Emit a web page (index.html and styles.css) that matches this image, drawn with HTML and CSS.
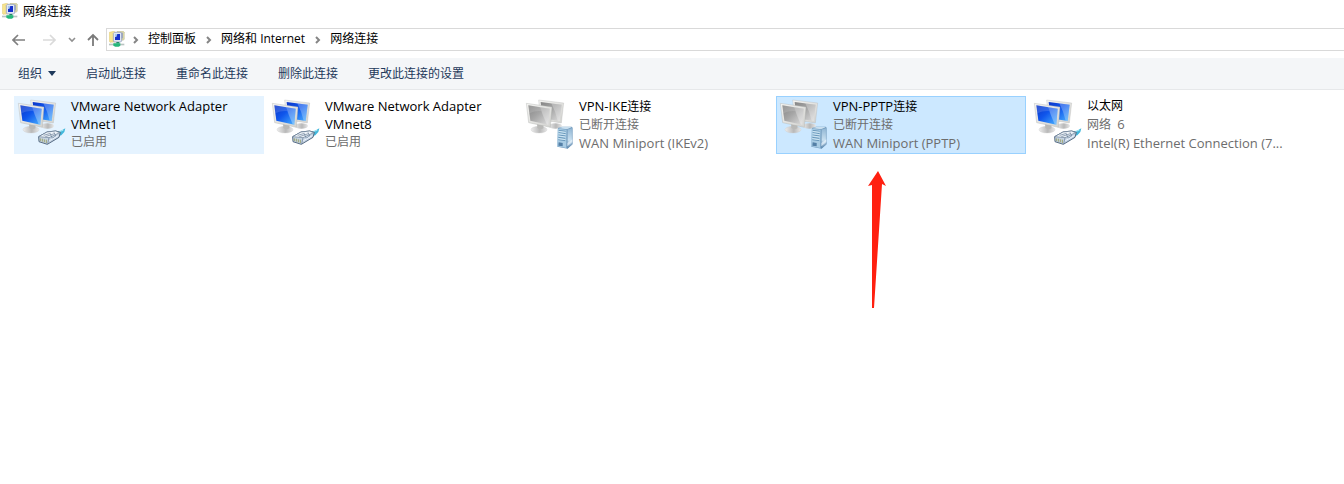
FILE: index.html
```html
<!DOCTYPE html>
<html lang="zh-CN">
<head>
<meta charset="utf-8">
<title>网络连接</title>
<link rel="stylesheet" href="styles.css">
</head>
<body>
<svg class="defs" aria-hidden="true">
  <defs>
    <linearGradient id="blue" x1="0" y1="0" x2="1" y2="1"><stop offset="0" stop-color="#0c35c8"/><stop offset=".45" stop-color="#0f56ec"/><stop offset="1" stop-color="#4bb4ff"/></linearGradient>
    <linearGradient id="gray" x1="0" y1="0" x2="1" y2="1"><stop offset="0" stop-color="#858585"/><stop offset=".45" stop-color="#a5a5a5"/><stop offset="1" stop-color="#dedede"/></linearGradient>
    <linearGradient id="bezel" x1="0" y1="0" x2="1" y2="1"><stop offset="0" stop-color="#f4f4f2"/><stop offset="1" stop-color="#d2d2cf"/></linearGradient>
    <linearGradient id="base" x1="0" y1="0" x2="1" y2="0"><stop offset="0" stop-color="#ededed"/><stop offset=".55" stop-color="#b8b8b8"/><stop offset="1" stop-color="#e8e8e8"/></linearGradient>
    <linearGradient id="side" x1="0" y1="0" x2="0" y2="1"><stop offset="0" stop-color="#8fb5d3"/><stop offset=".6" stop-color="#c9e0f0"/><stop offset="1" stop-color="#5d86ac"/></linearGradient>
    <symbol id="monitors" viewBox="12 12 159 165">
      <ellipse cx="112" cy="102" rx="20" ry="8" fill="url(#base)"/>
      <path d="M62 24L137 33L130 93L68 83Z" fill="url(#bezel)" stroke="#b0b1af"/>
      <path class="screen" d="M68 30L131 38L125 87L73 79Z"/>
      <path d="M100 34L131 38L125 87L119 86Q113 60 100 34Z" fill="#fff" opacity=".26"/>
      <ellipse cx="63" cy="113" rx="24" ry="10" fill="url(#base)" stroke="#c9c9c9"/>
      <path d="M57 94L77 98L76 109Q67 115 58 108Z" fill="#b9b9b7"/>
      <path d="M25 34L102 45L97 106L32 92Z" fill="url(#bezel)" stroke="#a5a6a4"/>
      <path class="screen" d="M31 40L95 50L91 98L37 86Z"/>
      <path d="M66 45L95 50L91 98L86 97Q74 70 66 45Z" fill="#fff" opacity=".3"/>
      <path d="M31 40L66 45L70 57Q52 55 34 64Z" fill="#fff" opacity=".14"/>
    </symbol>
    <symbol id="plug" viewBox="12 12 159 165">
      <path d="M136 121Q153 119 166 109L163 120L154 130L146 133Z" fill="#42b8dc"/>
      <path d="M139 121L160 115" stroke="#a4e6f3" stroke-width="3"/>
      <path d="M86 134L111 120L137 117L151 121L147 136L112 157L87 149Z" fill="#c5d3e2" stroke="#566b83" stroke-width="3"/>
      <path d="M86 134L111 120L137 117L149 122L117 137Z" fill="#eef3f8" stroke="#667c94" stroke-width="2"/>
      <path d="M117 137L113 156M101 130L122 124M106 134L133 125M121 126L127 139L137 132L132 121" fill="none" stroke="#667c96" stroke-width="2"/>
      <path d="M91 139V147M97 140V149M103 142V151M109 143V153" stroke="#9ea472" stroke-width="3"/>
      <path d="M118 146L145 131" stroke="#edf5ff" stroke-width="3"/>
    </symbol>
    <symbol id="server" viewBox="12 12 159 165">
      <path d="M120 108L132 104H161L163 107V157L149 170L118 164Z" fill="#6e99bd"/>
      <path d="M120 109L133 105H162L149 112Z" fill="#c9dfef"/>
      <path d="M119 110L146 113L145 168L118 163Z" fill="#a9cce4"/>
      <path d="M148 112L163 107V157L148 169Z" fill="url(#side)" stroke="#648cb0"/>
      <path d="M122 115L143 118M122 122L143 125M122 129L143 132M121 136L142 139M121 143L142 146" stroke="#477ba4" stroke-width="2"/>
      <path d="M122 118L143 121M122 125L143 128M122 132L143 135M121 140L142 143" stroke="#e4f3fb" stroke-width="2"/>
      <path d="M122 151L134 153V163L121 161Z" fill="#537fa6"/>
      <path d="M148 153L163 142V150L148 163Z" fill="#eef8ff" opacity=".65"/>
    </symbol>
    <symbol id="netfolder" viewBox="0 0 48 48">
      <path d="M1 4L14 1L20 4V33L3 34L1 31Z" fill="#f6e48f" stroke="#cdb054"/>
      <path d="M24 1H43L46 4V25L42 28L28 25Z" fill="#dcd9a8" stroke="#a8a476"/>
      <path d="M29 5H41V22H29Z" fill="#8492c4"/>
      <path d="M13 7L16 4H35L38 8V30L35 33H16L13 30Z" fill="#dfe6f4" stroke="#8894b4" stroke-width="2"/>
      <path d="M18 9H33V27H18Z" fill="#1631cd"/>
      <path d="M18 9H25L22 18H18Z" fill="#a7c8f0"/>
      <path d="M22 33H31V38H22Z" fill="#238a64"/>
      <path d="M0 38H46V43H0Z" fill="#b9c4c2"/>
      <path d="M13 37H34V44L29 47H19L13 44Z" fill="#24b77a"/>
    </symbol>
  </defs>
</svg>
<header class="title"><svg class="app-icon" aria-hidden="true"><use href="#netfolder"/></svg><h1>网络连接</h1></header>
<nav class="navigation" aria-label="导航">
  <div class="history">
    <button class="nav-button" aria-label="后退"><svg width="14" height="12" viewBox="0 0 14 12"><path d="M13 6H2M6 1L1 6L6 11" fill="none" stroke="#808080" stroke-width="1.7"/></svg></button>
    <button class="nav-button" aria-label="前进" disabled><svg width="14" height="12" viewBox="0 0 14 12"><path d="M1 6H12M8 1L13 6L8 11" fill="none" stroke="#dadada" stroke-width="1.7"/></svg></button>
    <button class="nav-button recent" aria-label="最近位置"><svg width="8" height="6" viewBox="0 0 8 6"><path d="M1 1L4 4L7 1" fill="none" stroke="#909090" stroke-width="1.6"/></svg></button>
    <button class="nav-button up" aria-label="上移"><svg width="12" height="14" viewBox="0 0 12 14"><path d="M6 13V2M1 7L6 2L11 7" fill="none" stroke="#7a7a7a" stroke-width="1.8"/></svg></button>
  </div>
  <div class="address">
    <svg class="app-icon" aria-hidden="true"><use href="#netfolder"/></svg>
    <svg class="chevron" viewBox="0 0 6 8"><path d="M1 1L4 4L1 7"/></svg><a href="#control">控制面板</a>
    <svg class="chevron" viewBox="0 0 6 8"><path d="M1 1L4 4L1 7"/></svg><a href="#network">网络和 Internet</a>
    <svg class="chevron" viewBox="0 0 6 8"><path d="M1 1L4 4L1 7"/></svg><a href="#connections">网络连接</a>
  </div>
</nav>
<div class="toolbar" role="toolbar">
  <button>组织<span class="caret"></span></button>
  <button>启动此连接</button>
  <button>重命名此连接</button>
  <button>删除此连接</button>
  <button>更改此连接的设置</button>
</div>
<main class="connections">
  <button class="tile hover"><svg class="device" aria-hidden="true"><use href="#monitors"/><use href="#plug"/></svg><span class="info"><span class="name latin">VMware Network Adapter<br>VMnet1</span><span>已启用</span></span></button>
  <button class="tile"><svg class="device" aria-hidden="true"><use href="#monitors"/><use href="#plug"/></svg><span class="info"><span class="name latin">VMware Network Adapter<br>VMnet8</span><span>已启用</span></span></button>
  <button class="tile offline"><svg class="device" aria-hidden="true"><use href="#monitors"/><use href="#server"/></svg><span class="info"><span class="name"><span class="latin">VPN-IKE</span>连接</span><span>已断开连接</span><span class="latin">WAN Miniport (IKEv2)</span></span></button>
  <div class="target">
    <button class="tile offline selected"><svg class="device" aria-hidden="true"><use href="#monitors"/><use href="#server"/></svg><span class="info"><span class="name"><span class="latin">VPN-PPTP</span>连接</span><span>已断开连接</span><span class="latin">WAN Miniport (PPTP)</span></span></button>
    <svg class="pointer" viewBox="0 0 20 138" aria-hidden="true"><path d="M11 1L19 16L15 14L7 138H5V15L1 16Z" fill="#ff2010"/></svg>
  </div>
  <button class="tile"><svg class="device" aria-hidden="true"><use href="#monitors"/><use href="#plug"/></svg><span class="info"><span class="name">以太网</span><span>网络&nbsp; <span class="latin">6</span></span><span class="latin">Intel(R) Ethernet Connection (7...</span></span></button>
</main>
</body>
</html>
```
FILE: styles.css
```css
* { box-sizing: border-box; }
body {
  display: flex;
  flex-direction: column;
  min-height: 100vh;
  margin: 0;
  background: #fff;
  color: #000;
  font: 12px/18px "Open Sans", "Noto Sans CJK SC", sans-serif;
}
button {
  margin: 0;
  padding: 0;
  border: 0;
  background: none;
  color: inherit;
  font: inherit;
}
.defs { position: absolute; width: 0; height: 0; }
.title {
  display: flex;
  align-items: center;
  gap: 5px;
  height: 24px;
  padding: 0 2px 2px;
}
.title h1 { margin: 0; padding-top: 2px; font-size: 12px; font-weight: 400; }
.app-icon { width: 16px; height: 16px; flex: none; }
.navigation { display: flex; height: 27px; margin-top: 4px; }
.history {
  display: flex;
  align-items: center;
  width: 106px;
  height: 24px;
  flex: none;
  padding-left: 12px;
}
.nav-button {
  display: flex;
  align-items: center;
  justify-content: center;
  width: 14px;
  height: 20px;
  margin-right: 16px;
}
.recent { width: 8px; margin: 0 10px 0 -4px; }
.recent + .up { margin: 0; }
.address {
  display: flex;
  align-items: center;
  flex: 1;
  height: 23px;
  padding: 0 0 2px 2px;
  border: 1px solid #d9d9d9;
  border-right: 0;
  white-space: nowrap;
}
.address a { color: #000; text-decoration: none; }
.chevron { width: 6px; height: 8px; flex: none; margin: 2px 9px 0 10px; }
.address .app-icon + .chevron { margin-left: 8px; }
.chevron path { fill: none; stroke: #858585; stroke-width: 2; }
.toolbar {
  display: flex;
  align-items: center;
  gap: 30px;
  height: 32px;
  margin-top: 3px;
  padding-left: 18px;
  border-bottom: 1px solid #e6e8ea;
  background: #f4f6f8;
  color: #1e395b;
  white-space: nowrap;
}
.toolbar button { display: flex; align-items: center; }
.caret {
  width: 8px;
  height: 5px;
  margin-left: 6px;
  background: #1e395b;
  clip-path: polygon(0 0, 100% 0, 50% 100%);
}
.connections {
  display: grid;
  flex: 1;
  grid-template-columns: repeat(auto-fill, 250px);
  align-content: start;
  align-items: start;
  gap: 4px;
  padding: 6px 14px;
}
.tile {
  display: flex;
  gap: 4px;
  width: 100%;
  min-height: 58px;
  align-items: flex-start;
  text-align: left;
}
.hover { background: #e5f3ff; }
.selected { background: #cce8ff; box-shadow: inset 0 0 0 1px #99d1ff; }
.device { width: 53px; height: 55px; flex: none; --screen: url(#blue); }
.screen { fill: var(--screen, url(#blue)); }
.offline .device { --screen: url(#gray); }
.info { display: flex; flex-direction: column; min-width: 0; padding-top: 1px; color: #6d6d6d; white-space: nowrap; }
.name { color: #000; }
.latin { font-size: 13px; }
.target { position: relative; }
.pointer { position: absolute; top: 74px; left: 91px; width: 20px; height: 138px; }
```
